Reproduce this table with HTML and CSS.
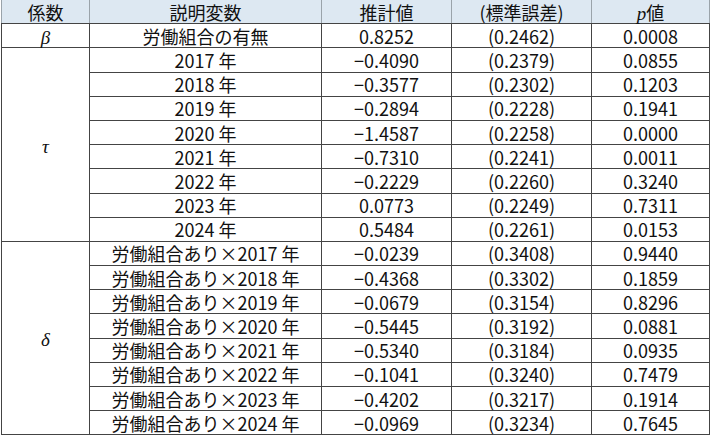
FILE: index.html
```html
<!DOCTYPE html>
<html lang="ja">
<head>
<meta charset="utf-8">
<link rel="stylesheet" href="styles.css">
</head>
<body>
<table class="tbl">
<colgroup>
<col class="c1"><col class="c2"><col class="c3"><col class="c4"><col class="c5">
</colgroup>
<thead>
<tr class="head"><th>係数</th><th>説明変数</th><th>推計値</th><th>(標準誤差)</th><th><span class="gk">p</span>値</th></tr>
</thead>
<tbody>
<tr><td class="sym"><span class="gk">β</span></td><td>労働組合の有無</td><td>0.8252</td><td>(0.2462)</td><td>0.0008</td></tr>
<tr><td class="sym" rowspan="8"><span class="gk">τ</span></td><td>2017 年</td><td>−0.4090</td><td>(0.2379)</td><td>0.0855</td></tr>
<tr><td>2018 年</td><td>−0.3577</td><td>(0.2302)</td><td>0.1203</td></tr>
<tr><td>2019 年</td><td>−0.2894</td><td>(0.2228)</td><td>0.1941</td></tr>
<tr><td>2020 年</td><td>−1.4587</td><td>(0.2258)</td><td>0.0000</td></tr>
<tr><td>2021 年</td><td>−0.7310</td><td>(0.2241)</td><td>0.0011</td></tr>
<tr><td>2022 年</td><td>−0.2229</td><td>(0.2260)</td><td>0.3240</td></tr>
<tr><td>2023 年</td><td>0.0773</td><td>(0.2249)</td><td>0.7311</td></tr>
<tr><td>2024 年</td><td>0.5484</td><td>(0.2261)</td><td>0.0153</td></tr>
<tr><td class="sym" rowspan="8"><span class="gk">δ</span></td><td>労働組合あり×2017 年</td><td>−0.0239</td><td>(0.3408)</td><td>0.9440</td></tr>
<tr><td>労働組合あり×2018 年</td><td>−0.4368</td><td>(0.3302)</td><td>0.1859</td></tr>
<tr><td>労働組合あり×2019 年</td><td>−0.0679</td><td>(0.3154)</td><td>0.8296</td></tr>
<tr><td>労働組合あり×2020 年</td><td>−0.5445</td><td>(0.3192)</td><td>0.0881</td></tr>
<tr><td>労働組合あり×2021 年</td><td>−0.5340</td><td>(0.3184)</td><td>0.0935</td></tr>
<tr><td>労働組合あり×2022 年</td><td>−0.1041</td><td>(0.3240)</td><td>0.7479</td></tr>
<tr><td>労働組合あり×2023 年</td><td>−0.4202</td><td>(0.3217)</td><td>0.1914</td></tr>
<tr><td>労働組合あり×2024 年</td><td>−0.0969</td><td>(0.3234)</td><td>0.7645</td></tr>
</tbody>
</table>
</body>
</html>
```

FILE: styles.css
```css
html, body {
  margin: 0;
  padding: 0;
  background: #ffffff;
}
body {
  padding-left: 1px;
}
.tbl {
  border-collapse: collapse;
  width: 708px;
  table-layout: fixed;
  font-family: "Noto Sans CJK JP", sans-serif;
  font-size: 18px;
  color: #111111;
}
.c1 { width: 88px; }
.c2 { width: 232px; }
.c3 { width: 130px; }
.c4 { width: 140px; }
.c5 { width: 118px; }
.tbl th, .tbl td {
  border: 1px solid #444444;
  height: 23.2px;
  padding: 0;
  text-align: center;
  vertical-align: middle;
  line-height: 22px;
  white-space: nowrap;
  font-weight: normal;
}
.head th {
  background: #dde8f2;
  border-top: none;
  border-color: #9aa3aa;
  border-bottom-color: #444444;
}
.gk {
  font-family: "Liberation Serif", serif;
  font-style: italic;
  font-size: 19px;
  line-height: 1;
}
```
